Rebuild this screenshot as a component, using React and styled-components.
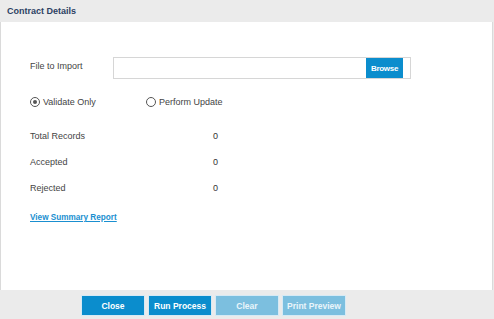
import React from "react";
import styled, { createGlobalStyle } from "styled-components";

const Global = createGlobalStyle`
  html, body {
    margin: 0;
    padding: 0;
    background: #ebebeb;
    font-family: "Liberation Sans", Arial, sans-serif;
  }
`;

const Dialog = styled.div`
  width: 494px;
  height: 319px;
  display: flex;
  flex-direction: column;
  background: #ebebeb;
`;

const Header = styled.div`
  height: 22px;
  line-height: 22px;
  padding-left: 7px;
  font-size: 9px;
  font-weight: bold;
  color: #2c4163;
  background: #ebebeb;
`;

const Body = styled.div`
  flex: 1;
  background: #fff;
  border-left: 1px solid #dadada;
  border-right: 1px solid #dadada;
  margin-right: 1px;
  padding: 35px 0 0 29px;
  display: flex;
  flex-direction: column;
  color: #444;
  font-size: 9px;
`;

const FileRow = styled.div`
  display: flex;
  align-items: flex-start;
  height: 22px;
`;

const FileLabel = styled.div`
  width: 83px;
  line-height: 16px;
  margin-top: 1px;
`;

const InputBox = styled.div`
  width: 289px;
  height: 20px;
  border: 1px solid #d6d6d6;
  display: flex;
  justify-content: flex-end;
  padding-right: 7px;
`;

const BrowseButton = styled.button`
  width: 37px;
  height: 20px;
  border: none;
  padding: 0;
  background: #0b8dcd;
  color: #fff;
  font-family: inherit;
  font-size: 8px;
  font-weight: bold;
  letter-spacing: -0.3px;
`;

const RadioRow = styled.div`
  display: flex;
  margin-top: 15px;
  height: 16px;
  line-height: 16px;
`;

const RadioOption = styled.label`
  display: flex;
  align-items: center;
  width: ${(p) => p.$width || "auto"};
`;

const RadioCircle = styled.span`
  width: 10px;
  height: 10px;
  border-radius: 50%;
  border: 1px solid #555;
  box-sizing: border-box;
  margin-right: 3px;
  display: flex;
  align-items: center;
  justify-content: center;

  &::after {
    content: "";
    width: 4px;
    height: 4px;
    border-radius: 50%;
    background: ${(p) => (p.$checked ? "#555" : "transparent")};
  }
`;

const Records = styled.div`
  display: flex;
  flex-direction: column;
  gap: 10px;
  margin-top: 18px;
`;

const RecordRow = styled.div`
  display: flex;
  height: 16px;
  line-height: 16px;
`;

const RecordLabel = styled.div`
  width: 183px;
`;

const RecordValue = styled.div`
  color: #333;
`;

const SummaryLink = styled.a`
  margin-top: 14px;
  line-height: 16px;
  font-size: 8.2px;
  font-weight: bold;
  color: #1a8fd0;
  text-decoration: underline;
  align-self: flex-start;
  cursor: pointer;
`;

const Footer = styled.div`
  height: 29px;
  display: flex;
  align-items: flex-start;
  padding: 5px 0 0 81px;
  gap: 3px;
  box-sizing: border-box;
`;

const ActionButton = styled.button`
  width: 64px;
  height: 21px;
  border: 1px solid #d6eaf5;
  padding: 0;
  background: ${(p) => (p.disabled ? "#7cbfdf" : "#0b8dcd")};
  color: ${(p) => (p.disabled ? "#eaf5fa" : "#fff")};
  font-family: inherit;
  font-size: 8.5px;
  font-weight: bold;
`;

const records = [
  { label: "Total Records", value: 0 },
  { label: "Accepted", value: 0 },
  { label: "Rejected", value: 0 },
];

const App = () => {
  return (
    <Dialog>
      <Global />
      <Header>Contract Details</Header>
      <Body>
        <FileRow>
          <FileLabel>File to Import</FileLabel>
          <InputBox>
            <BrowseButton>Browse</BrowseButton>
          </InputBox>
        </FileRow>
        <RadioRow>
          <RadioOption $width="116px">
            <RadioCircle $checked />
            Validate Only
          </RadioOption>
          <RadioOption>
            <RadioCircle />
            Perform Update
          </RadioOption>
        </RadioRow>
        <Records>
          {records.map((r) => (
            <RecordRow key={r.label}>
              <RecordLabel>{r.label}</RecordLabel>
              <RecordValue>{r.value}</RecordValue>
            </RecordRow>
          ))}
        </Records>
        <SummaryLink>View Summary Report</SummaryLink>
      </Body>
      <Footer>
        <ActionButton>Close</ActionButton>
        <ActionButton>Run Process</ActionButton>
        <ActionButton disabled>Clear</ActionButton>
        <ActionButton disabled>Print Preview</ActionButton>
      </Footer>
    </Dialog>
  );
};

export default App;
